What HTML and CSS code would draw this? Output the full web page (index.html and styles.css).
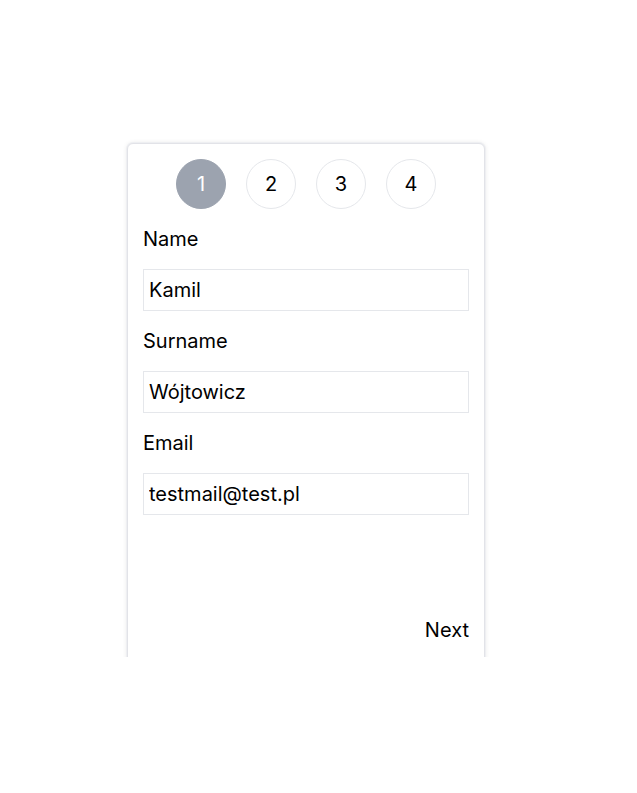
FILE: index.html
```html
<!DOCTYPE html>
<html lang="en">
<head>
<meta charset="utf-8">
<title>Form</title>
<link rel="stylesheet" href="styles.css">
</head>
<body>
<div class="page">
  <div class="clip">
    <div class="card">
      <div class="steps">
        <div class="step active">1</div>
        <div class="step">2</div>
        <div class="step">3</div>
        <div class="step">4</div>
      </div>
      <label class="label" for="name">Name</label>
      <input class="field" id="name" type="text" value="Kamil">
      <label class="label" for="surname">Surname</label>
      <input class="field" id="surname" type="text" value="Wójtowicz">
      <label class="label" for="email">Email</label>
      <input class="field" id="email" type="text" value="testmail@test.pl">
      <div class="actions">
        <button class="next" type="button">Next</button>
      </div>
    </div>
  </div>
</div>
</body>
</html>
```
FILE: styles.css
```css
* { box-sizing: border-box; }
html, body { margin: 0; background: #fff; }
body {
  font-family: Inter, "Noto Sans", sans-serif;
  color: #000;
}
.page {
  padding: 135px 0 0 119px;
}
.clip {
  width: 374px;
  height: 522px;
  padding: 8px 8px 0;
  overflow: hidden;
}
.card {
  width: 358px;
  border: 1px solid #e2e3e8;
  border-radius: 6px;
  box-shadow: 0 0 0 1px #eeeff2, 0 0 5px rgba(0, 0, 0, 0.1);
  padding: 15px 15px 40px;
  display: flex;
  flex-direction: column;
  background: #fff;
}
.steps {
  display: flex;
  justify-content: center;
  gap: 20px;
}
.step {
  width: 50px;
  height: 50px;
  border-radius: 50%;
  border: 1px solid #e5e7eb;
  display: flex;
  align-items: center;
  justify-content: center;
  font-size: 20px;
  color: #000;
  background: #fff;
}
.step.active {
  background: #9ca3af;
  border-color: #9ca3af;
  color: #fff;
}
.label {
  display: block;
  margin-top: 15px;
  font-size: 20px;
  line-height: 30px;
}
.field {
  display: block;
  margin-top: 15px;
  width: 100%;
  height: 42px;
  border: 1px solid #e5e7eb;
  border-radius: 0;
  padding: 0 5px;
  font-family: inherit;
  font-size: 20px;
  color: #000;
  background: #fff;
  outline: none;
}
.actions {
  margin-top: 100px;
  display: flex;
  justify-content: flex-end;
}
.next {
  border: 0;
  background: none;
  padding: 0;
  font-family: inherit;
  font-size: 20px;
  line-height: 30px;
  color: #000;
  cursor: pointer;
}
```
